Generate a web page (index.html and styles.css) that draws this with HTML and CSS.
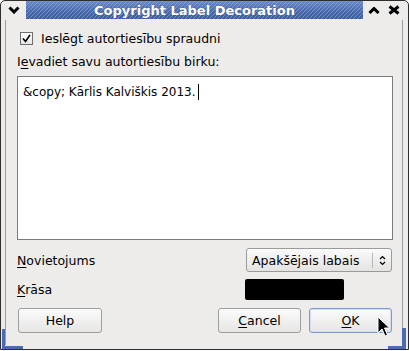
FILE: index.html
```html
<!DOCTYPE html>
<html lang="lv">
<head>
  <meta charset="UTF-8">
  <title>Copyright Label Decoration</title>
  <link rel="stylesheet" href="styles.css">
</head>
<body>
  <div class="window">
    <div class="titlebar">
      <div class="tb-btn tb-menu">
        <svg width="12" height="8" viewBox="0 0 12 8"><polyline points="1.5,1.5 6,6 10.5,1.5" fill="none" stroke="#000" stroke-width="3"/></svg>
      </div>
      <div class="tb-title">Copyright Label Decoration</div>
      <div class="tb-right">
        <div class="tb-btn tb-max">
          <svg width="12" height="7" viewBox="0 0 12 7"><polyline points="1.5,6 6,1.5 10.5,6" fill="none" stroke="#000" stroke-width="3"/></svg>
        </div>
        <div class="tb-btn tb-close">
          <svg width="12" height="10" viewBox="0 0 12 10"><path d="M1.5 1.5 L10.5 8.5 M10.5 1.5 L1.5 8.5" stroke="#000" stroke-width="3"/></svg>
        </div>
      </div>
    </div>

    <div class="client">
      <div class="check-row">
        <span class="checkbox">
          <svg width="9" height="9" viewBox="0 0 9 9"><polyline points="1,4.5 3.5,7.5 8,1" fill="none" stroke="#000" stroke-width="1.6"/></svg>
        </span>
        <span>Ieslēgt autortiesību spraudni</span>
      </div>

      <div class="field-label">I<u>e</u>vadiet savu autortiesību birku:</div>
      <div class="entry">&amp;copy; Kārlis Kalviškis 2013.<span class="caret"></span></div>

      <div class="row row-place">
        <span><u>N</u>ovietojums</span>
        <div class="combo">
          <span class="combo-text">Apakšējais labais</span>
          <span class="combo-sep"></span>
          <span class="combo-arrows">
            <svg width="7" height="11" viewBox="0 0 7 11"><polyline points="1,4 3.5,1.5 6,4" fill="none" stroke="#000" stroke-width="1.2"/><polyline points="1,7 3.5,9.5 6,7" fill="none" stroke="#000" stroke-width="1.2"/></svg>
          </span>
        </div>
      </div>

      <div class="row row-color">
        <span><u>K</u>rāsa</span>
        <div class="swatch"></div>
      </div>

      <div class="row row-buttons">
        <div class="btn btn-help">Help</div>
        <div class="btn-group">
          <div class="btn"><u>C</u>ancel</div>
          <div class="btn btn-default"><u>O</u>K</div>
        </div>
      </div>
    </div>

    <div class="corner corner-bl"></div>
    <div class="corner corner-br"></div>

    <svg class="cursor" width="14" height="22" viewBox="0 0 14 22">
      <path d="M1 1 L1 17 L5 13 L8 20 L10.5 19 L7.5 12 L12.5 12 Z" fill="#000" stroke="#fff" stroke-width="1"/>
    </svg>
  </div>
</body>
</html>
```

FILE: styles.css
```css
body {
  margin: 0;
  background: #ffffff;
  font-family: "DejaVu Sans", sans-serif;
  font-size: 12.5px;
  color: #000;
}

.window {
  position: relative;
  width: 409px;
  height: 350px;
  box-sizing: border-box;
  border: 1px solid #2e2e2e;
  border-radius: 5px 5px 0 0;
  background: #edeceb;
  display: flex;
  flex-direction: column;
  overflow: hidden;
}

/* title bar */
.titlebar {
  height: 18px;
  display: flex;
  flex-shrink: 0;
}

.tb-btn {
  display: flex;
  align-items: center;
  justify-content: center;
}

.tb-menu {
  width: 25px;
}

.tb-title {
  flex: 1;
  display: flex;
  align-items: center;
  justify-content: center;
  color: #fff;
  font-weight: bold;
  font-size: 13px;
  text-shadow: 0 0 1px #2c4680;
  background:
    repeating-linear-gradient(135deg, rgba(150, 175, 225, 0.6) 0 1px, transparent 1px 2.83px),
    linear-gradient(#6a8bc7, #4868aa 60%, #3d5c9c);
}

.tb-right {
  display: flex;
  padding-right: 5px;
}

.tb-max {
  width: 22px;
}

.tb-close {
  width: 18px;
}

/* dialog body */
.client {
  flex: 1;
  margin: 1px 5px 4px 4px;
  border-left: 1px solid #9d9c9b;
  border-right: 1px solid #9d9c9b;
  padding: 10px 9px 0 11px;
  display: flex;
  flex-direction: column;
}

.check-row {
  display: flex;
  align-items: center;
  height: 17px;
}

.checkbox {
  width: 13px;
  height: 13px;
  box-sizing: border-box;
  border: 1px solid #6e6e6e;
  background: linear-gradient(#ffffff, #e6e6e6);
  margin: 0 8px 0 3px;
  display: flex;
  align-items: center;
  justify-content: center;
}

.field-label {
  margin-top: 7px;
  height: 16px;
  line-height: 16px;
}

u {
  text-decoration: underline;
  text-underline-offset: 2px;
  text-decoration-thickness: 1px;
}

.entry {
  margin-top: 6px;
  height: 164px;
  box-sizing: border-box;
  border: 1px solid #7b7b7b;
  background: #fff;
  padding: 7px 5px;
  font-size: 12px;
  line-height: 16px;
}

.caret {
  display: inline-block;
  width: 1px;
  height: 16px;
  background: #000;
  vertical-align: top;
  margin-left: 2px;
}

.row {
  display: flex;
  align-items: center;
  justify-content: space-between;
}

.row-place {
  margin-top: 8px;
  height: 24px;
}

.combo {
  width: 146px;
  height: 24px;
  box-sizing: border-box;
  margin-right: 1px;
  border: 1px solid #9a9a9a;
  border-radius: 3px;
  background: linear-gradient(#fbfbfb, #e4e3e2);
  padding-left: 5px;
  display: flex;
  align-items: center;
}

.combo-text {
  width: 120px;
}

.combo-sep {
  width: 1px;
  height: 15px;
  background: #b8b8b8;
}

.combo-arrows {
  flex: 1;
  display: flex;
  justify-content: center;
}

.row-color {
  margin-top: 7px;
  height: 21px;
}

.swatch {
  width: 99px;
  height: 21px;
  margin-right: 49px;
  background: #000;
  border-radius: 2px;
}

.row-buttons {
  margin-top: 8px;
  height: 25px;
}

.btn-group {
  display: flex;
  gap: 8px;
  margin-right: 1px;
}

.btn {
  width: 83px;
  height: 25px;
  box-sizing: border-box;
  border: 1px solid #9e9e9e;
  border-radius: 3px;
  background: linear-gradient(#fcfcfc, #e6e5e4);
  display: flex;
  align-items: center;
  justify-content: center;
}

.btn-help {
  width: 84px;
  margin-left: 1px;
}

.btn-default {
  border-color: #7c9bd0;
  box-shadow: inset 0 0 0 1px #d3def2;
}

/* focus corners of the frame */
.corner {
  position: absolute;
  bottom: 0;
  box-sizing: border-box;
  border: 0 solid #4a6bb0;
}

.corner-bl {
  left: 1px;
  width: 21px;
  height: 20px;
  border-left-width: 3px;
  border-bottom-width: 3px;
}

.corner-br {
  right: 2px;
  width: 18px;
  height: 21px;
  border-right-width: 4px;
  border-bottom-width: 3px;
}

.cursor {
  position: absolute;
  left: 376px;
  top: 315px;
}
```
